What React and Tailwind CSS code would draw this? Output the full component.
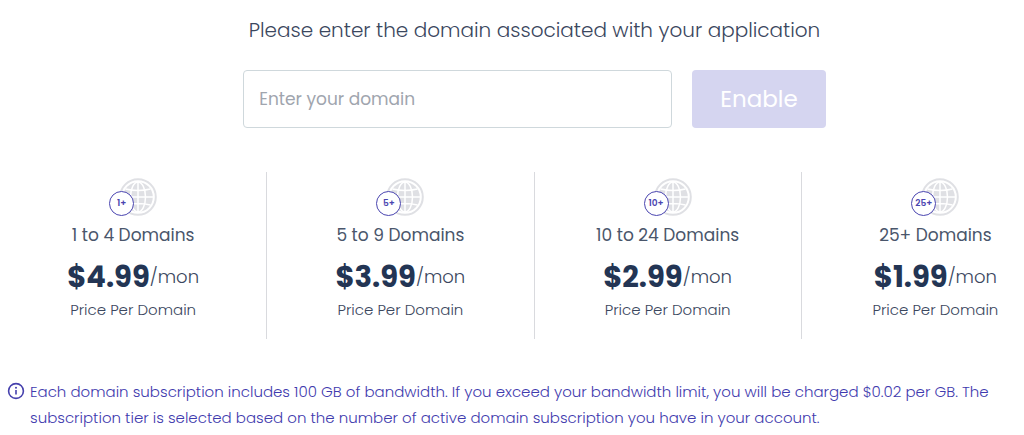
import React, { useState } from 'react';

const tiers = [
    { badge: '1+', label: '1 to 4 Domains', price: '$4.99' },
    { badge: '5+', label: '5 to 9 Domains', price: '$3.99' },
    { badge: '10+', label: '10 to 24 Domains', price: '$2.99' },
    { badge: '25+', label: '25+ Domains', price: '$1.99' }
];

const GlobeBadge = ({ text }) => (
    <div className="relative w-12 h-[38px]">
        <svg viewBox="0 0 38 38" fill="none" className="absolute right-0 top-0 w-[38px] h-[38px]" aria-hidden="true">
            <circle cx="19" cy="19" r="17.8" stroke="#dfe0e4" strokeWidth="2" />
            <circle cx="19" cy="19" r="14.8" fill="#dfe0e4" />
            <g stroke="#fff" strokeWidth="1.5">
                <ellipse cx="19" cy="19" rx="7.5" ry="15" />
                <path d="M19 4v30M4 19h30M6.5 11Q19 14 31.5 11M6.5 27Q19 24 31.5 27" />
            </g>
        </svg>
        <span className="absolute left-0 bottom-0 w-[25px] h-[25px] flex items-center justify-center rounded-full border border-[#4a45b0] bg-white text-[9px] leading-none font-semibold text-[#4a45b0]">
            {text}
        </span>
    </div>
);

const InfoIcon = () => (
    <svg viewBox="0 0 18 18" fill="none" className="w-[18px] h-[18px] mt-[3px] shrink-0" aria-hidden="true">
        <circle cx="9" cy="9" r="7.4" stroke="#4540ad" strokeWidth="1.6" />
        <circle cx="9" cy="5.8" r="1" fill="#4540ad" />
        <path d="M9 8v4.6" stroke="#4540ad" strokeWidth="1.6" />
    </svg>
);

const App = () => {
    const [domain, setDomain] = useState('');

    return (
        <main className="overflow-hidden bg-white font-[Poppins,Inter,sans-serif] font-light text-[#3b475e]">
            {/* The pricing panel runs past the right edge of the window */}
            <div className="-mr-[45px] pt-4">
                <form onSubmit={(e) => e.preventDefault()} className="flex flex-col items-center">
                    <label htmlFor="domain" className="mb-[26px] text-xl leading-7">
                        Please enter the domain associated with your application
                    </label>
                    <div className="flex gap-5">
                        <input
                            id="domain"
                            type="text"
                            value={domain}
                            onChange={(e) => setDomain(e.target.value)}
                            placeholder="Enter your domain"
                            className="w-[429px] h-[58px] px-[15px] border border-[#cfd8dc] rounded text-[17px] font-normal outline-none placeholder:text-[#a0a5ae]"
                        />
                        <button type="submit" disabled={!domain} className="px-7 h-[58px] rounded bg-[#d5d5f0] text-white text-[23px] font-normal">
                            Enable
                        </button>
                    </div>
                </form>

                <section className="mt-11 grid grid-cols-4 divide-x divide-[#d9dade]">
                    {tiers.map((tier) => (
                        <div key={tier.badge} className="flex flex-col items-center pt-1.5 pb-4">
                            <GlobeBadge text={tier.badge} />
                            <h2 className="mt-[5px] text-[17px] leading-7 font-normal text-[#4a566b]">{tier.label}</h2>
                            <p className="mt-2 flex items-center text-lg leading-10">
                                <strong className="text-[29px] font-bold text-[#233554]">{tier.price}</strong>
                                <span>/mon</span>
                            </p>
                            <p className="text-[15px] leading-[26px]">Price Per Domain</p>
                        </div>
                    ))}
                </section>
            </div>

            <div className="mt-10 pl-[7px] pr-5 pb-1 flex gap-[5px] text-[#3f3bae]">
                <InfoIcon />
                <p className="text-[15px] leading-[26px]">
                    Each domain subscription includes 100 GB of bandwidth. If you exceed your bandwidth limit, you will be charged $0.02 per GB. The subscription tier is selected based on the number of active domain subscription you have in your account.
                </p>
            </div>
        </main>
    );
};

export default App;
